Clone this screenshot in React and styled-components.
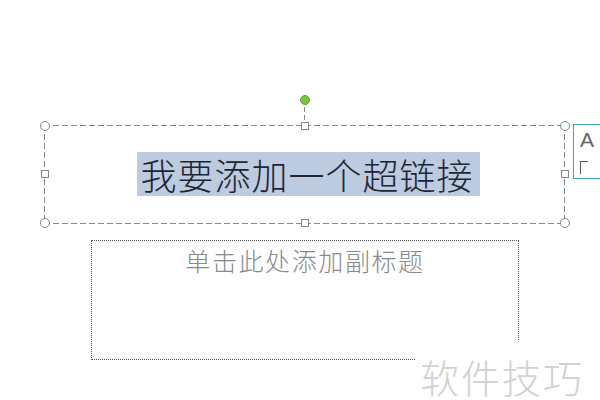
import React from "react";
import styled, { createGlobalStyle } from "styled-components";

const Global = createGlobalStyle`
  html, body { margin: 0; padding: 0; background: #fff; }
  body { width: 600px; height: 400px; overflow: hidden; }
`;

const Slide = styled.div`
  position: relative;
  width: 600px;
  height: 400px;
  padding: 125px 0 0 44px;
  box-sizing: border-box;
  background: #fff;
  font-family: "Noto Sans CJK SC", "Noto Sans", sans-serif;
`;

const dash = "#7d8994";

const TitleBox = styled.div`
  position: relative;
  width: 521px;
  height: 99px;
  box-sizing: border-box;
  display: flex;
  align-items: center;
  justify-content: center;
  padding: 0 0 2px 8px;
  background:
    repeating-linear-gradient(90deg, ${dash} 0 6px, transparent 6px 9px) top left / 100% 1px no-repeat,
    repeating-linear-gradient(90deg, ${dash} 0 6px, transparent 6px 9px) bottom left / 100% 1px no-repeat,
    repeating-linear-gradient(180deg, ${dash} 0 6px, transparent 6px 9px) top left / 1px 100% no-repeat,
    repeating-linear-gradient(180deg, ${dash} 0 6px, transparent 6px 9px) top right / 1px 100% no-repeat;
`;

const Selected = styled.span`
  display: block;
  background: #bccbe0;
  color: #1d2633;
  font-size: 36px;
  font-weight: 300;
  line-height: 44px;
  height: 44px;
  padding: 0 6px 0 3px;
  letter-spacing: 1px;
`;

const HandleGrid = styled.div`
  position: absolute;
  inset: -5px -5px -4px -5px;
  display: grid;
  grid-template-columns: 11px 1fr 11px;
  grid-template-rows: 11px 1fr 11px;
  place-items: center;
  pointer-events: none;
`;

const Handle = styled.span`
  box-sizing: border-box;
  background: #fff;
  border: 1px solid #7f8790;
  width: ${(p) => (p.$round ? 10 : 8)}px;
  height: ${(p) => (p.$round ? 10 : 8)}px;
  border-radius: ${(p) => (p.$round ? "50%" : "0")};
`;

const Empty = styled.span``;

const Rotator = styled.div`
  position: absolute;
  left: 50%;
  top: -30px;
  transform: translateX(-50%);
  display: flex;
  flex-direction: column;
  align-items: center;
`;

const RotateKnob = styled.span`
  width: 10px;
  height: 10px;
  box-sizing: border-box;
  border-radius: 50%;
  background: #7cc43c;
  border: 1px solid #5e9e2c;
`;

const RotateStem = styled.span`
  width: 1px;
  height: 17px;
  margin-top: 2px;
  background: repeating-linear-gradient(180deg, ${dash} 0 5px, transparent 5px 8px);
`;

const SubBox = styled.div`
  width: 428px;
  height: 120px;
  margin: 16px 0 0 47px;
  box-sizing: border-box;
  border: 1px dotted #555;
  color: #8a8a8a;
  font-size: 25px;
  font-weight: 300;
  text-align: center;
  line-height: 36px;
  padding-top: 1px;
  letter-spacing: 1.6px;
`;

const SideTag = styled.div`
  position: absolute;
  left: 573px;
  top: 124px;
  width: 40px;
  height: 55px;
  box-sizing: border-box;
  border: 1px solid #3aa6b0;
  border-right: none;
  padding: 4px 0 0 6px;
  font-family: "Liberation Sans", sans-serif;
  color: #666;
`;

const TagLetter = styled.div`
  font-size: 21px;
  line-height: 22px;
`;

const TagMark = styled.div`
  margin-top: 10px;
  width: 7px;
  height: 12px;
  border-top: 1px solid #555;
  border-left: 1px solid #555;
`;

const Watermark = styled.div`
  position: absolute;
  left: 415px;
  top: 340px;
  width: 185px;
  height: 60px;
  background: #fff;
  display: flex;
  align-items: flex-end;
  justify-content: flex-end;
  padding: 0 16px 4px 0;
  box-sizing: border-box;
  color: #d2d2d2;
  font-size: 39px;
  line-height: 40px;
  font-weight: 300;
  letter-spacing: 2px;
`;

export default function App() {
  return (
    <>
      <Global />
      <Slide>
        <TitleBox>
          <Rotator>
            <RotateKnob />
            <RotateStem />
          </Rotator>
          <HandleGrid>
            <Handle $round />
            <Handle />
            <Handle $round />
            <Handle />
            <Empty />
            <Handle />
            <Handle $round />
            <Handle />
            <Handle $round />
          </HandleGrid>
          <Selected>我要添加一个超链接</Selected>
        </TitleBox>
        <SubBox>单击此处添加副标题</SubBox>
        <SideTag>
          <TagLetter>A</TagLetter>
          <TagMark />
        </SideTag>
        <Watermark>软件技巧</Watermark>
      </Slide>
    </>
  );
}
